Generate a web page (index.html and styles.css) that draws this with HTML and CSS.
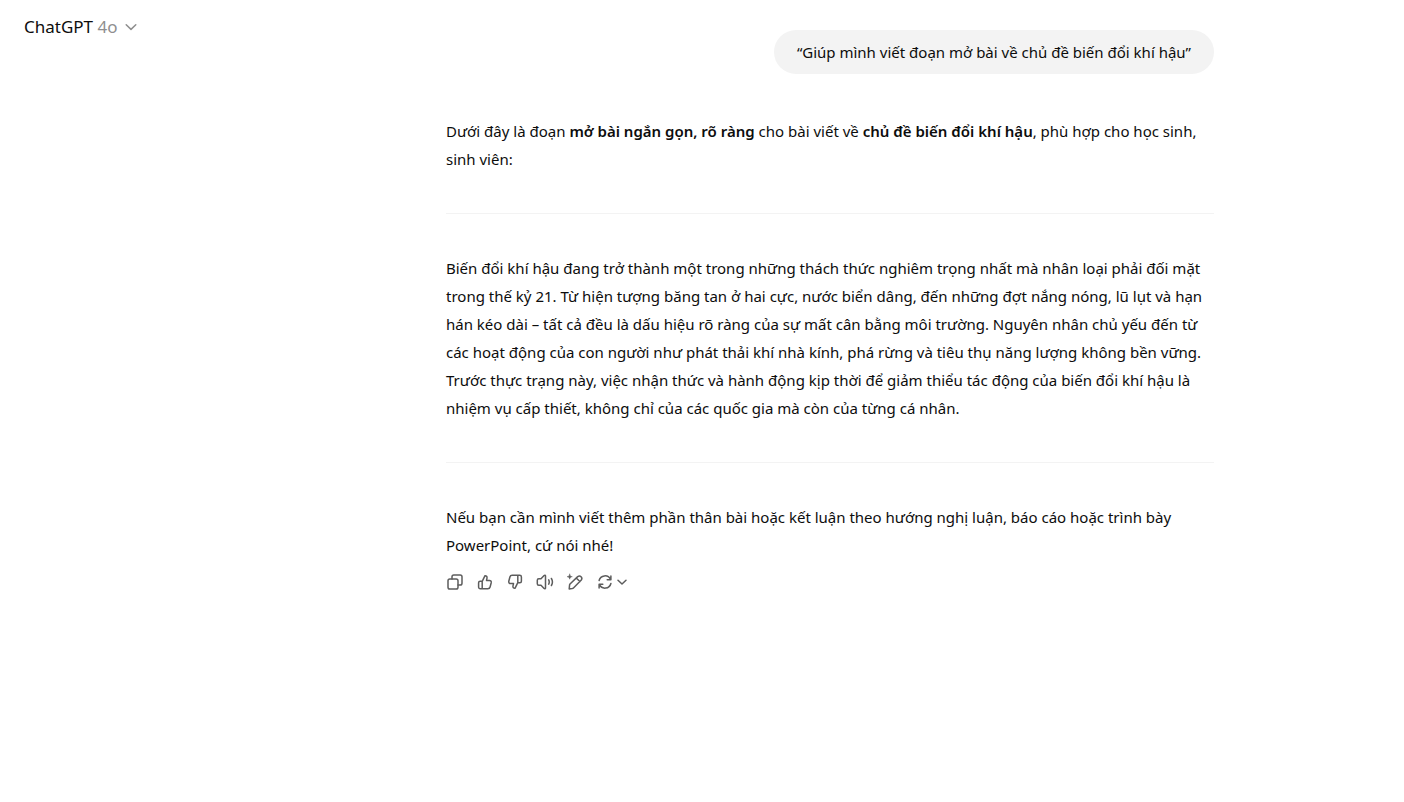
FILE: index.html
```html
<!DOCTYPE html>
<html lang="vi">
<head>
<meta charset="utf-8">
<meta name="viewport" content="width=device-width, initial-scale=1">
<title>ChatGPT</title>
<link rel="stylesheet" href="styles.css">
</head>
<body>
<div class="app">
  <header class="topbar">
    <button class="model" type="button">
      <span>ChatGPT <span class="version">4o</span></span>
      <svg class="chevron" viewBox="0 0 12 12" aria-hidden="true"><path d="M1.2 3.700 6 8.400l4.800-4.700"/></svg>
    </button>
  </header>
  <main class="thread">
    <div class="bubble">“Giúp mình viết đoạn mở bài về chủ đề biến đổi khí hậu”</div>
    <article class="answer">
      <p>Dưới đây là đoạn <strong>mở bài ngắn gọn, rõ ràng</strong> cho bài viết về <strong>chủ đề biến đổi khí hậu</strong>, phù hợp cho học sinh, sinh viên:</p>
      <hr>
      <p>Biến đổi khí hậu đang trở thành một trong những thách thức nghiêm trọng nhất mà nhân loại phải đối mặt trong thế kỷ 21. Từ hiện tượng băng tan ở hai cực, nước biển dâng, đến những đợt nắng nóng, lũ lụt và hạn hán kéo dài – tất cả đều là dấu hiệu rõ ràng của sự mất cân bằng môi trường. Nguyên nhân chủ yếu đến từ các hoạt động của con người như phát thải khí nhà kính, phá rừng và tiêu thụ năng lượng không bền vững. Trước thực trạng này, việc nhận thức và hành động kịp thời để giảm thiểu tác động của biến đổi khí hậu là nhiệm vụ cấp thiết, không chỉ của các quốc gia mà còn của từng cá nhân.</p>
      <hr>
      <p>Nếu bạn cần mình viết thêm phần thân bài hoặc kết luận theo hướng nghị luận, báo cáo hoặc trình bày PowerPoint, cứ nói nhé!</p>
    </article>
    <div class="actions">
      <button type="button" aria-label="Sao chép">
        <svg viewBox="0 0 18 18"><rect x="2" y="6" width="10" height="10" rx="1.800"/><path d="M6 6V3.800a1.800 1.800 0 0 1 1.800-1.800h6.400a1.800 1.800 0 0 1 1.800 1.800v6.400a1.800 1.800 0 0 1-1.800 1.800H12"/></svg>
      </button>
      <button type="button" aria-label="Câu trả lời tốt">
        <svg viewBox="0 0 18 18"><path d="M6.200 8.300 8.900 2.800c1.400-.2 2.400.9 2.100 2.300L10.500 7.400h2.900c1.300 0 2.100 1 1.800 2.300l-1.100 4.300c-.3 1.100-1.100 1.700-2.200 1.700H4.300c-1 0-1.700-.7-1.700-1.700V9.800c0-.9.600-1.500 1.500-1.500h2.100v7.400"/></svg>
      </button>
      <button type="button" aria-label="Câu trả lời không tốt">
        <svg viewBox="0 0 18 18"><path d="M11.800 9.700 9.100 15.200c-1.400.2-2.400-.9-2.100-2.300l.5-2.300H4.600c-1.300 0-2.100-1-1.800-2.300L3.900 4c.3-1.100 1.100-1.700 2.200-1.700h7.600c1 0 1.700.7 1.700 1.700v4.200c0 .9-.6 1.500-1.500 1.500h-2.100V2.300"/></svg>
      </button>
      <button type="button" aria-label="Đọc to">
        <svg viewBox="0 0 18 18"><path d="M9.500 3v12c0 .8-.8 1-1.400.5L5 12.300H2.800c-.9 0-1.500-.6-1.500-1.500V7.200c0-.9.600-1.500 1.500-1.500H5l3.100-3.200c.6-.5 1.400-.3 1.400.5ZM12.700 6.800c.7 1.400.7 3 0 4.400M15.400 5.500c1.300 2.200 1.300 4.800 0 7"/></svg>
      </button>
      <button type="button" aria-label="Chỉnh sửa">
        <svg viewBox="0 0 18 18"><path d="m4 11 7.700-7.400c2.500-1.800 5.300 1 3.600 3.400l-7.600 7.800c-.4.400-1 .7-1.600.8l-2.900.3.300-3.200c0-.7.200-1.300.5-1.700ZM10.300 5l3.500 3.600"/><path class="spark" d="M3.700 1.200c.3 1.700.9 2.200 2.600 2.500-1.700.3-2.300.8-2.600 2.500-.3-1.700-.9-2.200-2.600-2.500 1.700-.3 2.300-.8 2.600-2.500Z"/></svg>
      </button>
      <button class="retry" type="button" aria-label="Tạo lại">
        <svg viewBox="0 0 18 18"><path d="M3.100 7.500A6.100 6.100 0 0 1 14.500 6.300M14.900 3v3.700h-3.700M14.900 10.500A6.100 6.100 0 0 1 3.500 11.700M3.100 15v-3.700h3.700"/></svg>
        <svg class="chevron" viewBox="0 0 12 12"><path d="M2 4.200 6 8l4-3.800"/></svg>
      </button>
    </div>
  </main>
</div>
</body>
</html>
```
FILE: styles.css
```css
* {
  box-sizing: border-box;
}

body {
  margin: 0;
  background: #fff;
  color: #0d0d0d;
  font-family: "Segoe UI", "Noto Sans", "Open Sans", sans-serif;
  font-size: 15px;
  line-height: 28px;
}

button {
  display: flex;
  align-items: center;
  border: 0;
  background: none;
  color: inherit;
  font: inherit;
}

svg {
  width: 18px;
  height: 18px;
  fill: none;
  stroke: currentColor;
  stroke-width: 1.5;
  stroke-linecap: round;
  stroke-linejoin: round;
}

svg.chevron {
  width: 12px;
  height: 12px;
}

.app {
  display: grid;
  grid-template-columns: 256px minmax(0, 1fr);
  min-height: 100vh;
}

.topbar {
  padding: 13px 16px;
}

.model {
  gap: 8px;
  padding: 0 8px;
  font-size: 17px;
}

.version,
.model .chevron {
  color: #8f8f8f;
}

.thread {
  display: flex;
  flex-direction: column;
  width: 100%;
  max-width: 768px;
  margin: 0 auto;
  padding-top: 30px;
}

.bubble {
  align-self: flex-end;
  padding: 8px 23px;
  border-radius: 22px;
  background: #f3f3f3;
}

.answer {
  padding-top: 43px;
}

.answer p {
  margin: 0;
}

.answer strong {
  font-weight: 600;
}

.answer hr {
  height: 1px;
  margin: 40px 0;
  border: 0;
  background: #f3f3f3;
}

.actions {
  display: flex;
  padding-top: 8px;
  color: #5d5d5d;
}

.actions button {
  width: 30px;
  height: 30px;
  padding: 0;
}

.actions .retry {
  gap: 2px;
  width: auto;
}

.spark {
  fill: currentColor;
  stroke-width: 0.5;
}
```
